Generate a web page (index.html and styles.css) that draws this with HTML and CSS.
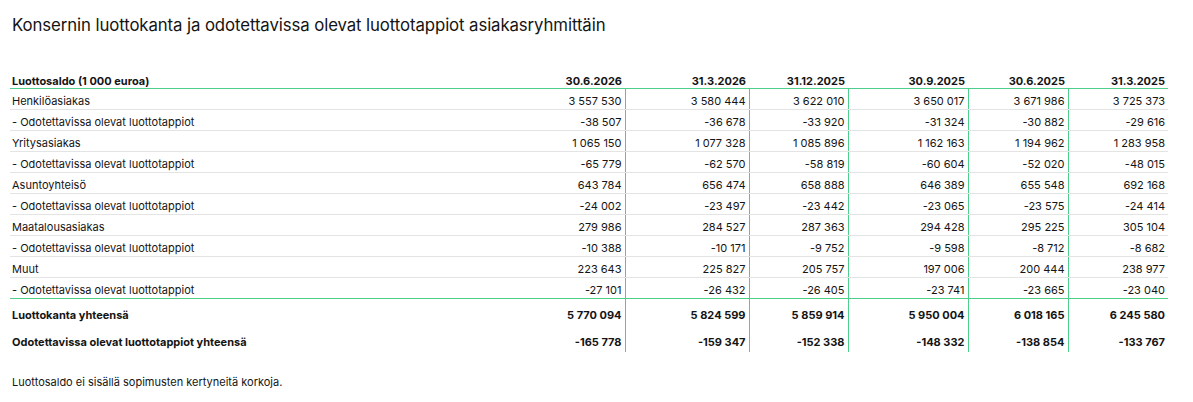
FILE: index.html
```html
<!DOCTYPE html>
<html lang="fi">
<head>
<meta charset="utf-8">
<title>Luottokanta</title>
<link rel="stylesheet" href="styles.css">
</head>
<body>
<div class="page">
  <h1 class="title">Konsernin luottokanta ja odotettavissa olevat luottotappiot asiakasryhmittäin</h1>
  <table class="grid">
    <colgroup>
      <col class="c-label"><col class="c1"><col class="c2"><col class="c3"><col class="c4"><col class="c5"><col class="c6">
    </colgroup>
    <thead>
      <tr>
        <th class="lbl">Luottosaldo (1 000 euroa)</th>
        <th>30.6.2026</th><th>31.3.2026</th><th>31.12.2025</th><th>30.9.2025</th><th>30.6.2025</th><th>31.3.2025</th>
      </tr>
    </thead>
    <tbody class="body">
      <tr><td class="lbl">Henkilöasiakas</td><td>3 557 530</td><td>3 580 444</td><td>3 622 010</td><td>3 650 017</td><td>3 671 986</td><td>3 725 373</td></tr>
      <tr><td class="lbl">- Odotettavissa olevat luottotappiot</td><td>-38 507</td><td>-36 678</td><td>-33 920</td><td>-31 324</td><td>-30 882</td><td>-29 616</td></tr>
      <tr><td class="lbl">Yritysasiakas</td><td>1 065 150</td><td>1 077 328</td><td>1 085 896</td><td>1 162 163</td><td>1 194 962</td><td>1 283 958</td></tr>
      <tr><td class="lbl">- Odotettavissa olevat luottotappiot</td><td>-65 779</td><td>-62 570</td><td>-58 819</td><td>-60 604</td><td>-52 020</td><td>-48 015</td></tr>
      <tr><td class="lbl">Asuntoyhteisö</td><td>643 784</td><td>656 474</td><td>658 888</td><td>646 389</td><td>655 548</td><td>692 168</td></tr>
      <tr><td class="lbl">- Odotettavissa olevat luottotappiot</td><td>-24 002</td><td>-23 497</td><td>-23 442</td><td>-23 065</td><td>-23 575</td><td>-24 414</td></tr>
      <tr><td class="lbl">Maatalousasiakas</td><td>279 986</td><td>284 527</td><td>287 363</td><td>294 428</td><td>295 225</td><td>305 104</td></tr>
      <tr><td class="lbl">- Odotettavissa olevat luottotappiot</td><td>-10 388</td><td>-10 171</td><td>-9 752</td><td>-9 598</td><td>-8 712</td><td>-8 682</td></tr>
      <tr><td class="lbl">Muut</td><td>223 643</td><td>225 827</td><td>205 757</td><td>197 006</td><td>200 444</td><td>238 977</td></tr>
      <tr class="last"><td class="lbl">- Odotettavissa olevat luottotappiot</td><td>-27 101</td><td>-26 432</td><td>-26 405</td><td>-23 741</td><td>-23 665</td><td>-23 040</td></tr>
    </tbody>
    <tbody class="totals">
      <tr><td class="lbl">Luottokanta yhteensä</td><td>5 770 094</td><td>5 824 599</td><td>5 859 914</td><td>5 950 004</td><td>6 018 165</td><td>6 245 580</td></tr>
      <tr><td class="lbl">Odotettavissa olevat luottotappiot yhteensä</td><td>-165 778</td><td>-159 347</td><td>-152 338</td><td>-148 332</td><td>-138 854</td><td>-133 767</td></tr>
    </tbody>
  </table>
  <p class="note">Luottosaldo ei sisällä sopimusten kertyneitä korkoja.</p>
</div>
</body>
</html>
```

FILE: styles.css
```css
* { box-sizing: border-box; }
html, body { margin: 0; padding: 0; background: #fff; }
body {
  font-family: Inter, "Noto Sans", "Liberation Sans", sans-serif;
  color: #141414;
}
.page { padding: 0 10px; }
.title {
  margin: 0;
  padding: 15px 2px 0;
  font-size: 16.8px;
  font-weight: 400;
  line-height: 20px;
  letter-spacing: -0.1px;
}
.grid {
  margin-top: 37px;
  width: 1158px;
  border-collapse: collapse;
  table-layout: fixed;
  font-size: 11px;
}
.c-label { width: 515px; }
.c1 { width: 100px; }
.c2 { width: 124px; }
.c3 { width: 99px; }
.c4 { width: 120px; }
.c5 { width: 100px; }
.c6 { width: 100px; }
.grid th, .grid td {
  padding: 0 3px 0 2px;
  text-align: right;
  white-space: nowrap;
  font-weight: 400;
}
.grid .lbl { text-align: left; }
.grid thead th {
  font-weight: 700;
  height: 16px;
  vertical-align: bottom;
  padding-bottom: 0;
  border-bottom: 1px solid #4ccf8c;
}
.body td {
  height: 21px;
  vertical-align: bottom;
  padding-bottom: 1px;
  border-bottom: 1px solid #e4e4e4;
}
.body tr.last td { border-bottom: 1px solid #4ccf8c; }
.body td:not(.lbl):not(:last-child),
.totals td:not(.lbl):not(:last-child) {
  border-right: 1px solid #4ccf8c;
}
.totals td {
  font-weight: 700;
  height: 27px;
  vertical-align: bottom;
  padding-bottom: 3px;
}
.note {
  margin: 23px 0 0;
  padding-left: 2px;
  font-size: 11px;
}
```
